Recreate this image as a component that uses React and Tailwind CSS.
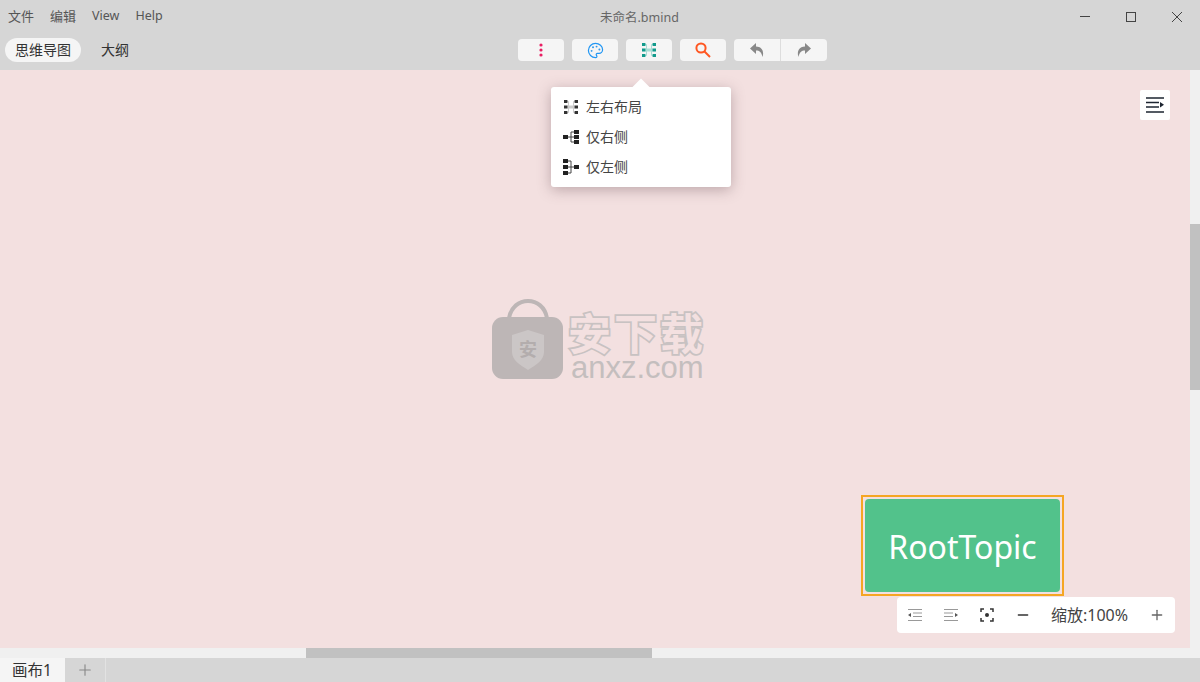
import React from 'react';
import { Palette, Plus, Minus } from 'lucide-react';

const MENU = [
  ['文件', 'text-[13px]'],
  ['编辑', 'text-[13px]'],
  ['View', 'text-[12.5px]'],
  ['Help', 'text-[12.5px]'],
];

// small tree icons used by the layout popover and toolbar
const BothSidesIcon = ({ color = '#333', link = '#ccc' }) => (
  <svg width="16" height="14" viewBox="0 0 16 14">
    <path d="M4 7h8" stroke={link} strokeWidth="3" />
    <path d="M4 1.5h1.5v11H4M12 1.5h-1.5v11H12" stroke={link} fill="none" />
    <rect x="1" y="0" width="3.4" height="3" fill={color} />
    <rect x="1" y="5.5" width="3.4" height="3" fill={color} />
    <rect x="1" y="11" width="3.4" height="3" fill={color} />
    <rect x="11.6" y="0" width="3.4" height="3" fill={color} />
    <rect x="11.6" y="5.5" width="3.4" height="3" fill={color} />
    <rect x="11.6" y="11" width="3.4" height="3" fill={color} />
  </svg>
);

const RightIcon = () => (
  <svg width="16" height="14" viewBox="0 0 16 14" fill="#222">
    <rect x="0" y="5" width="5" height="4" />
    <rect x="11" y="0" width="5" height="4" />
    <rect x="11" y="5" width="5" height="4" />
    <rect x="11" y="10" width="5" height="4" />
    <path d="M5 7h6M8 2v10M8 2h3M8 12h3" stroke="#444" fill="none" />
  </svg>
);

const LeftIcon = () => (
  <svg width="16" height="16" viewBox="0 0 16 16" fill="#222">
    <rect x="0" y="0" width="5" height="4" />
    <rect x="0" y="6" width="5" height="4" />
    <rect x="0" y="12" width="5" height="4" />
    <rect x="11" y="6" width="5" height="4" />
    <path d="M5 8h6M8 2v12M8 2H5M8 14H5" stroke="#444" fill="none" />
  </svg>
);

const OutdentIcon = ({ flip }) => (
  <svg width="14" height="12" viewBox="0 0 14 12" className={flip ? '-scale-x-100' : ''}>
    <path d="M0 .5h14M5 4h9M5 7.5h9M0 11.5h14" stroke="#999" />
    <path d="M3 4v4L0 6z" fill="#555" />
  </svg>
);

const UndoIcon = ({ flip }) => (
  <svg width="16" height="16" viewBox="0 0 16 16" fill="#888" className={flip ? '-scale-x-100' : ''}>
    <path d="M7 1L1 6.5 7 12V8.5c3.5 0 5.5 1.5 6.5 6.5C15.500 9 12.500 4.500 7 4.500z" />
  </svg>
);

const ToolButton = ({ children }) => (
  <button className="w-[46px] h-[22px] bg-[#f5f5f5] rounded flex items-center justify-center">
    {children}
  </button>
);

const Header = () => (
  <header className="h-[70px] bg-[#d6d6d6] shrink-0">
    <div className="h-[33px] flex items-center relative">
      <nav className="flex items-center gap-4 pl-2 text-[#555]">
        {MENU.map(([m, size]) => (
          <span key={m} className={size}>{m}</span>
        ))}
      </nav>
      <span className="absolute left-[600px] top-[9px] text-[12.5px] text-[#666]">未命名.bmind</span>
      <div className="ml-auto flex items-center gap-[36px] pr-[18px]">
        <svg width="10" height="10" viewBox="0 0 10 10"><path d="M0 4.500h10" stroke="#444" /></svg>
        <svg width="10" height="10" viewBox="0 0 10 10"><rect x=".5" y=".5" width="9" height="9" fill="none" stroke="#444" /></svg>
        <svg width="10" height="10" viewBox="0 0 10 10"><path d="M0 0l10 10M10 0L0 10" stroke="#444" /></svg>
      </div>
    </div>
    <div className="h-[24px] mt-[5px] flex items-center">
      <div className="w-[518px] flex items-center pl-[5px] text-[14px] text-[#333]">
        <span className="w-[76px] h-[24px] pb-[2px] rounded-xl bg-[#f5f5f5] flex items-center justify-center">思维导图</span>
        <span className="ml-5 pb-[2px]">大纲</span>
      </div>
      <div className="flex gap-2">
        <ToolButton>
          <svg width="4" height="14" viewBox="0 0 4 14" fill="#e91e63">
            <circle cx="2" cy="2" r="1.6" />
            <circle cx="2" cy="7" r="1.6" />
            <circle cx="2" cy="12" r="1.6" />
          </svg>
        </ToolButton>
        <ToolButton><Palette size={17} color="#2196f3" strokeWidth={1.7} /></ToolButton>
        <ToolButton><BothSidesIcon color="#129a8c" link="#a8dcd4" /></ToolButton>
        <ToolButton>
          <svg width="16" height="16" viewBox="0 0 16 16" fill="none" stroke="#ff5722" strokeWidth="2">
            <circle cx="6" cy="6" r="4.600" />
            <path d="M9.500 9.500l5.500 5.500" />
          </svg>
        </ToolButton>
        <div className="flex h-[22px] w-[93px] rounded bg-[#f5f5f5]">
          <span className="w-[47px] flex items-center justify-center border-r border-[#ddd]"><UndoIcon /></span>
          <span className="flex-1 flex items-center justify-center"><UndoIcon flip /></span>
        </div>
      </div>
    </div>
  </header>
);

const LayoutPopover = () => (
  <div className="absolute left-[551px] top-[17px] w-[180px] h-[100px] bg-white rounded-[3px] py-[5px] shadow-[0_3px_14px_rgba(90,60,70,0.35)] z-10">
    <div className="absolute left-[84px] -top-[6px] w-[12px] h-[12px] bg-white rotate-45" />
    {[
      [<BothSidesIcon key="a" />, '左右布局'],
      [<RightIcon key="b" />, '仅右侧'],
      [<LeftIcon key="c" />, '仅左侧'],
    ].map(([icon, label]) => (
      <div key={label} className="relative h-[30px] flex items-center text-[14px] text-[#444]">
        <span className="w-[35px] pl-[12px] flex items-center">{icon}</span>
        <span className="pb-[2px]">{label}</span>
      </div>
    ))}
  </div>
);

const Watermark = () => (
  <div className="absolute left-[492px] top-[229px] flex items-start text-[#bdb6b6]">
    <svg width="72" height="80" viewBox="0 0 72 80">
      <path d="M17 19C19 8 27 2 36 2s17 6 19 17" fill="none" stroke="#bdb6b6" strokeWidth="4" />
      <rect x="0" y="18" width="71" height="62" rx="11" fill="#bdb6b6" />
      <path d="M20 36l16-5 16 5v17c0 8-8 13-16 18-8-5-16-10-16-18z" fill="#cbc6c6" />
      <text x="36" y="57" textAnchor="middle" fontSize="18" fontWeight="700" fill="#b3adad" fontFamily="Noto Sans CJK SC">安</text>
    </svg>
    <div className="ml-[4px] mt-[12px] flex flex-col items-start">
      <span className="text-[43px] tracking-[3px] leading-[40px] font-bold text-[#f3e0e0] font-['Noto_Sans_CJK_SC',sans-serif] [-webkit-text-stroke:3.5px_#c8c2c2] [paint-order:stroke_fill]">安下载</span>
      <span className="ml-[3px] text-[31px] leading-[26px] mt-[4px] text-[#c4bebe] font-['Liberation_Sans',sans-serif]">anxz.com</span>
    </div>
  </div>
);

const ZoomBar = () => (
  <div className="absolute left-[897px] top-[527px] w-[278px] h-[36px] bg-white rounded-sm flex items-center text-[#333]">
    <span className="w-[36px] flex justify-center"><OutdentIcon /></span>
    <span className="w-[36px] flex justify-center"><OutdentIcon flip /></span>
    <span className="w-[36px] flex justify-center">
      <svg width="14" height="14" viewBox="0 0 14 14" fill="none" stroke="#333" strokeWidth="1.5">
        <path d="M1 4V1h3M10 1h3v3M13 10v3h-3M4 13H1v-3" />
        <circle cx="7" cy="7" r="2" fill="#333" stroke="none" />
      </svg>
    </span>
    <span className="w-[36px] flex justify-center"><Minus size={16} strokeWidth={2} /></span>
    <span className="ml-[10px] w-[98px] text-[16px] text-[#444]">缩放:100%</span>
    <Plus size={16} color="#666" strokeWidth={2} />
  </div>
);

const Canvas = () => (
  <div className="flex-1 flex min-h-0">
    <div className="flex-1 flex flex-col min-w-0">
      <main className="relative flex-1 bg-[#f3e0e0]">
        <div className="absolute left-[1140px] top-[20px] w-[30px] h-[30px] bg-white rounded-[2px] flex items-center justify-center">
          <svg width="18" height="16" viewBox="0 0 18 16" stroke="#1c2430" strokeWidth="1.6">
            <path d="M0 1h18M0 5.500h13M0 10h13M0 15h18" />
            <path d="M14 5v5.500l4-2.700z" fill="#1c2430" stroke="none" />
          </svg>
        </div>
        <LayoutPopover />
        <Watermark />
        <div className="absolute left-[861px] top-[425px] w-[203px] h-[101px] border-2 border-[#f5a623] p-[2px]">
          <div className="h-full pt-[3px] rounded bg-[#52c28b] flex items-center justify-center text-white text-[32px]">
            RootTopic
          </div>
        </div>
        <ZoomBar />
      </main>
      <div className="h-[10px] bg-[#f0f0f0] shrink-0">
        <div className="ml-[306px] w-[346px] h-full bg-[#c1c1c1]" />
      </div>
    </div>
    <div className="w-[10px] bg-[#f0f0f0] shrink-0">
      <div className="mt-[154px] h-[166px] bg-[#c1c1c1]" />
    </div>
  </div>
);

const Footer = () => (
  <footer className="h-[24px] bg-[#d6d6d6] flex shrink-0">
    <div className="w-[65px] bg-[#f5f5f5] pl-3 text-[15.500px] leading-[24px] text-[#333]">画布1</div>
    <div className="w-[41px] flex items-center justify-center border-r border-[#e2e2e2] text-[#888]">
      <Plus size={18} strokeWidth={1.500} />
    </div>
  </footer>
);

export default function App() {
  return (
    <div className="w-[1200px] h-[682px] flex flex-col overflow-hidden font-['Noto_Sans','Noto_Sans_CJK_SC',sans-serif]">
      <Header />
      <Canvas />
      <Footer />
    </div>
  );
}
